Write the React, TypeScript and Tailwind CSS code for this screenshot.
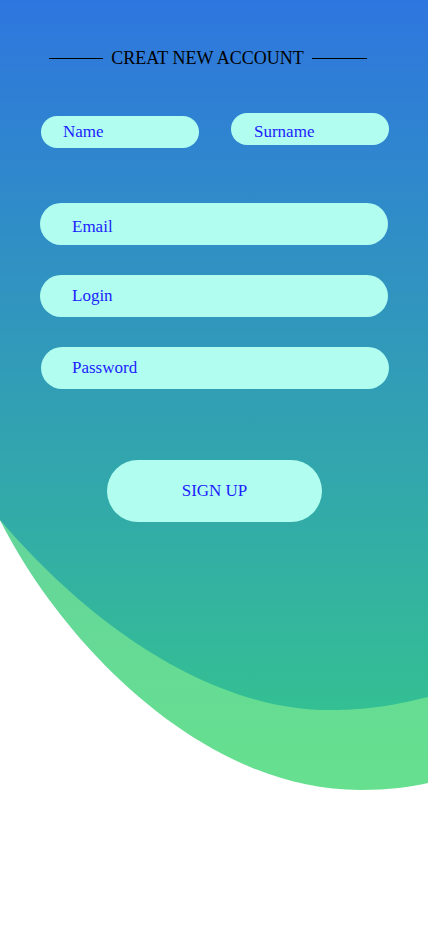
import React from 'react';

const serif = { fontFamily: '"Liberation Serif", "DejaVu Serif", serif' };

const Field: React.FC<{ placeholder: string; className: string }> = ({ placeholder, className }) => (
  <input
    type="text"
    placeholder={placeholder}
    className={`block rounded-full bg-[#b1fef0] text-[17px] text-[#1c1cff] placeholder:text-[#1c1cff] outline-none ${className}`}
    style={serif}
  />
);

const App: React.FC = () => {
  return (
    <div className="relative w-[428px] h-[926px] overflow-hidden bg-white" style={serif}>
      {/* Background blobs */}
      <svg className="absolute inset-0" width="428" height="926" viewBox="0 0 428 926">
        <defs>
          <linearGradient id="front" x1="0" y1="0" x2="0" y2="1">
            <stop offset="0%" stopColor="#2e76df" />
            <stop offset="100%" stopColor="#34bf93" />
          </linearGradient>
          <linearGradient id="back" x1="0" y1="0" x2="0" y2="1">
            <stop offset="0%" stopColor="#64d0a0" />
            <stop offset="100%" stopColor="#66e08f" />
          </linearGradient>
        </defs>
        <path d="M0 400 V520 C60 640 200 790 360 790 C390 790 410 787 428 783 V400 Z" fill="url(#back)" />
        <path d="M0 0 H428 V697 C400 704 370 710 330 710 C210 710 90 625 0 520 Z" fill="url(#front)" />
      </svg>

      <div className="relative z-10 flex flex-col pt-[46px]">
        <div className="flex items-center justify-center gap-[8px] h-6 pr-[12px]">
          <span className="w-[54px] h-px bg-black" />
          <h1 className="text-[18px] text-black leading-6">CREAT NEW ACCOUNT</h1>
          <span className="w-[55px] h-px bg-black" />
        </div>

        <div className="flex items-start gap-[32px] pl-[41px] mt-[43px]">
          <Field placeholder="Name" className="w-[158px] h-[32px] mt-[3px] pl-[22px]" />
          <Field placeholder="Surname" className="w-[158px] h-[32px] pl-[23px] pt-[5px]" />
        </div>

        <Field placeholder="Email" className="w-[348px] h-[42px] ml-[40px] mt-[55px] pl-[32px] pt-[5px]" />
        <Field placeholder="Login" className="w-[348px] h-[42px] ml-[40px] mt-[30px] pl-[32px]" />
        <Field placeholder="Password" className="w-[348px] h-[42px] ml-[41px] mt-[30px] pl-[31px]" />

        <button
          type="button"
          className="self-start ml-[107px] mt-[71px] w-[215px] h-[62px] rounded-full bg-[#b1fef0] text-[17px] text-[#1c1cff]"
          style={serif}
        >
          SIGN UP
        </button>
      </div>
    </div>
  );
};

export default App;
